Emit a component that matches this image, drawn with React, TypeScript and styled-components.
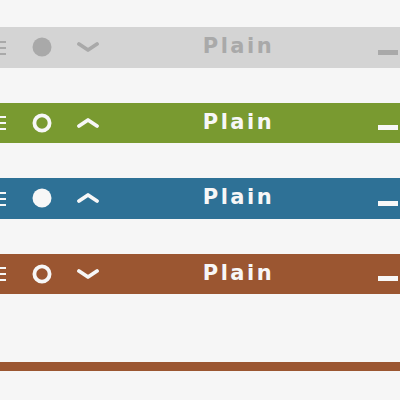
import React from "react";
import styled, { createGlobalStyle } from "styled-components";

const GlobalStyle = createGlobalStyle`
  html, body {
    margin: 0;
    padding: 0;
    background: #f6f6f6;
  }
`;

type Tone = { bg: string; fg: string };

const tones: Record<string, Tone> = {
  inactive: { bg: "#d4d4d4", fg: "#a9a9a9" },
  green: { bg: "#799a30", fg: "#f7f7f7" },
  blue: { bg: "#2e7196", fg: "#f7f7f7" },
  brown: { bg: "#9b5631", fg: "#f7f7f7" },
};

const Page = styled.div`
  width: 400px;
  height: 400px;
  overflow: hidden;
  padding-top: 27px;
  box-sizing: border-box;
  display: flex;
  flex-direction: column;
  gap: 35px;
`;

const TitleBar = styled.div<{ $tone: Tone }>`
  height: 40.5px;
  flex-shrink: 0;
  background: ${(p) => p.$tone.bg};
  color: ${(p) => p.$tone.fg};
  display: flex;
  align-items: center;
  padding-right: 2px;
`;

const Menu = styled.div`
  width: 6px;
  height: 14px;
  display: flex;
  flex-direction: column;
  justify-content: space-between;
  margin-top: 1px;

  span {
    display: block;
    height: 2px;
    background: currentColor;
  }
`;

const IconSlot = styled.div<{ $left: number }>`
  display: flex;
  margin-left: ${(p) => p.$left}px;
`;

const Title = styled.div`
  flex: 1;
  text-align: center;
  font-family: "DejaVu Sans", sans-serif;
  font-weight: bold;
  font-size: 21px;
  letter-spacing: 2.5px;
  margin-top: -2px;
`;

const Minimize = styled.div`
  width: 20px;
  height: 5px;
  background: currentColor;
  margin-top: 10px;
`;

const Stripe = styled.div`
  height: 9px;
  flex-shrink: 0;
  background: #9b5631;
  margin-top: 33px;
`;

const Dot = ({ filled }: { filled: boolean }) => (
  <svg width="20" height="20" viewBox="0 0 20 20">
    {filled ? (
      <circle cx="10" cy="10" r="9.5" fill="currentColor" />
    ) : (
      <circle cx="10" cy="10" r="7.6" fill="none" stroke="currentColor" strokeWidth="3.8" />
    )}
  </svg>
);

const Chevron = ({ up }: { up: boolean }) => (
  <svg width="22" height="12" viewBox="0 0 22 12">
    <polyline
      points={up ? "2,9 11,3 20,9" : "2,3 11,9 20,3"}
      fill="none"
      stroke="currentColor"
      strokeWidth="3.8"
      strokeLinecap="round"
      strokeLinejoin="round"
    />
  </svg>
);

const Bar = ({ tone, filled, up }: { tone: Tone; filled: boolean; up: boolean }) => (
  <TitleBar $tone={tone}>
    <Menu>
      <span />
      <span />
      <span />
    </Menu>
    <IconSlot $left={26}>
      <Dot filled={filled} />
    </IconSlot>
    <IconSlot $left={25}>
      <Chevron up={up} />
    </IconSlot>
    <Title>Plain</Title>
    <Minimize />
  </TitleBar>
);

export default function App() {
  return (
    <>
      <GlobalStyle />
      <Page>
        <Bar tone={tones.inactive} filled up={false} />
        <Bar tone={tones.green} filled={false} up />
        <Bar tone={tones.blue} filled up />
        <Bar tone={tones.brown} filled={false} up={false} />
        <Stripe />
      </Page>
    </>
  );
}
